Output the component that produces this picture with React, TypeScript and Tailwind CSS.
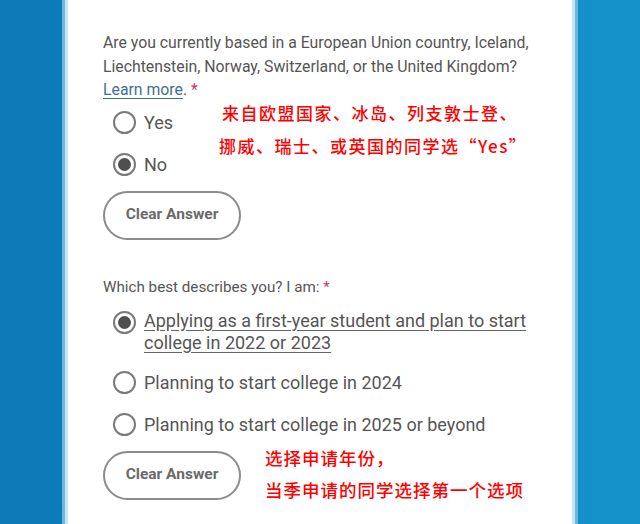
import React from 'react'

const latin = { fontFamily: 'Roboto, "Noto Sans", sans-serif' }
const cjk = { fontFamily: '"Noto Sans CJK SC", "Noto Sans", sans-serif' }

function Radio({ checked }: { checked?: boolean }) {
  return (
    <span className="flex h-[23px] w-[23px] shrink-0 items-center justify-center rounded-full border-2 border-[#7a7a7a] bg-white">
      {checked && <span className="h-[13px] w-[13px] rounded-full bg-[#4f4f4f]" />}
    </span>
  )
}

function Option({ label, checked }: { label: string; checked?: boolean }) {
  return (
    <div className="flex h-[42px] items-center gap-[8px] pl-[10px]">
      <Radio checked={checked} />
      <span className="text-[18px] text-[#555]">{label}</span>
    </div>
  )
}

function ClearButton({ className = '' }: { className?: string }) {
  return (
    <button
      type="button"
      className={`flex h-[49px] w-[138px] items-center justify-center rounded-full border-2 border-[#8c8c8c] bg-white text-[15.5px] font-bold text-[#6a6a6a] ${className}`}
    >
      Clear Answer
    </button>
  )
}

export default function App() {
  return (
    <div className="flex h-[524px] w-[640px] overflow-hidden bg-gradient-to-r from-[#0d79b7] to-[#1592ca]" style={latin}>
      <div className="ml-[62px] h-full w-[516px] border-x-[3px] border-[#6fb6df]">
        <div className="relative h-full border-x-[3px] border-[#c8e4f4] bg-white pl-[35px] pt-[31px]">
          <p className="text-[15.8px] leading-[23.5px] text-[#555]">
            Are you currently based in a European Union country, Iceland,
            <br />
            Liechtenstein, Norway, Switzerland, or the United Kingdom?
            <br />
            <span className="text-[#3f6f92] underline decoration-[#3f6f92] underline-offset-[3px]">Learn more</span>.{' '}
            <span className="text-[#d6336c]">*</span>
          </p>

          <Option label="Yes" />
          <Option label="No" checked />
          <ClearButton className="mt-[5px]" />

          <p className="mt-[36px] text-[15.2px] leading-[23px] text-[#555]">
            Which best describes you? I am: <span className="text-[#d6336c]">*</span>
          </p>

          <div className="mt-[11px] flex items-start gap-[8px] pl-[10px]">
            <span className="mt-[1px]">
              <Radio checked />
            </span>
            <span className="text-[18px] leading-[22px] text-[#555] underline decoration-[#666] underline-offset-[3px]">
              Applying as a first-year student and plan to start
              <br />
              college in 2022 or 2023
            </span>
          </div>
          <div className="mt-[8px]">
            <Option label="Planning to start college in 2024" />
            <Option label="Planning to start college in 2025 or beyond" />
          </div>
          <ClearButton className="mt-[5px]" />

          <div className="absolute left-[151px] top-[96px] text-[17px] font-medium leading-[33px] tracking-[1.5px] text-[#ff0000]" style={cjk}>
            <div className="pl-[3px]">来自欧盟国家、冰岛、列支敦士登、</div>
            <div>挪威、瑞士、或英国的同学选“Yes”</div>
          </div>
          <div className="absolute left-[197px] top-[442px] text-[17.5px] font-medium leading-[32px] tracking-[1px] text-[#ff0000]" style={cjk}>
            <div>选择申请年份，</div>
            <div>当季申请的同学选择第一个选项</div>
          </div>
        </div>
      </div>
    </div>
  )
}
